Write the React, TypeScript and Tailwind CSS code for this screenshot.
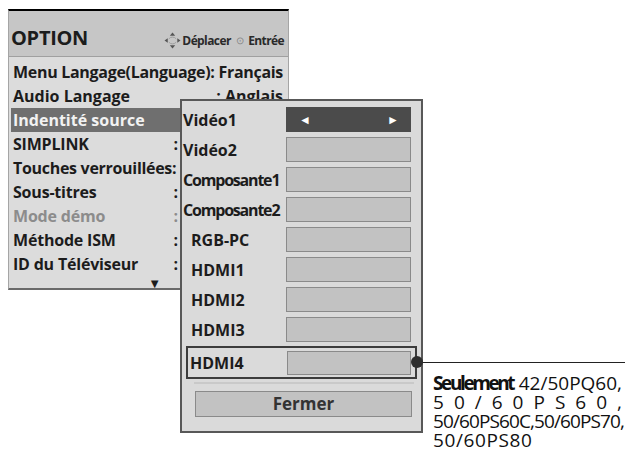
const menuRows = [
  { label: "Menu Langage(Language): Français", kind: "full" },
  { label: "Audio Langage", kind: "value", value: ": Anglais" },
  { label: "Indentité source", kind: "active" },
  { label: "SIMPLINK", kind: "colon" },
  { label: "Touches verrouillées:", kind: "full" },
  { label: "Sous-titres", kind: "colon" },
  { label: "Mode démo", kind: "colon", dim: true },
  { label: "Méthode ISM", kind: "colon" },
  { label: "ID du Téléviseur", kind: "colon" },
];

const sources = [
  { label: "Vidéo1", indent: false, squeeze: false },
  { label: "Vidéo2", indent: false, squeeze: false },
  { label: "Composante1", indent: false, squeeze: true },
  { label: "Composante2", indent: false, squeeze: true },
  { label: "RGB-PC", indent: true, squeeze: false },
  { label: "HDMI1", indent: true, squeeze: false },
  { label: "HDMI2", indent: true, squeeze: false },
  { label: "HDMI3", indent: true, squeeze: false },
];

const MoveIcon = () => (
  <svg width="17" height="17" viewBox="0 0 16 16" className="shrink-0">
    <path d="M4.5 6.5 A4.5 4.5 0 0 1 11.5 6.5" fill="none" stroke="#999" strokeWidth="0.8" />
    <path d="M4.5 9.5 A4.5 4.5 0 0 0 11.5 9.5" fill="none" stroke="#999" strokeWidth="0.8" />
    <polygon points="8,0.5 10.5,3.5 5.5,3.5" fill="#555" />
    <polygon points="8,15.5 10.5,12.5 5.5,12.5" fill="#555" />
    <polygon points="0.5,8 3.5,5.8 3.5,10.2" fill="#555" />
    <polygon points="15.5,8 12.5,5.8 12.5,10.2" fill="#555" />
  </svg>
);

const Field = ({ active }: { active?: boolean }) =>
  active ? (
    <div className="w-[125px] h-[25px] bg-[#4b4b4b] flex items-center justify-between pl-[13px] pr-[12px] text-[12px] text-white leading-none">
      <span>◄</span>
      <span>►</span>
    </div>
  ) : (
    <div className="w-[125px] h-[25px] bg-[#c2c2c2] border border-[#8a8a8a]" />
  );

export default function App() {
  return (
    <div className="relative w-[625px] h-[456px] bg-white overflow-hidden font-['Open_Sans',sans-serif] text-[#1c1c1c]">
      {/* main OPTION menu */}
      <div className="ml-[8px] mt-[9px] w-[281px] border-t-2 border-t-black border-x border-x-[#a5a5a5] border-b-2 border-b-[#6a6a6a] bg-[#dcdcdc]">
        <div className="h-[46px] bg-[#c6c6c6] border-b border-[#a0a0a0] flex items-center justify-between pl-[2px] pr-[4px] pt-[9px]">
          <span className="text-[20px] font-bold tracking-[-0.3px]">OPTION</span>
          <div className="flex items-center gap-[1px] text-[12px] font-bold tracking-[-0.6px] text-[#2a2a2a] pt-[5px]">
            <MoveIcon />
            <span>Déplacer</span>
            <span className="text-[#888] text-[10px] mx-[4px] font-normal">⊙</span>
            <span>Entrée</span>
          </div>
        </div>
        <div className="pt-[3px] px-[2px]">
          {menuRows.map((row) => (
            <div
              key={row.label}
              className={
                "h-[24px] flex items-center text-[16px] font-bold pl-[2px] " +
                (row.kind === "active" ? "bg-[#6f6f6f] text-[#f2f2f2] " : "") +
                (row.dim ? "text-[#8c8c8c] " : "")
              }
            >
              {row.kind === "full" && <span className="tracking-[-0.3px] whitespace-nowrap">{row.label}</span>}
              {row.kind === "value" && (
                <div className="flex w-full justify-between pr-[3px]">
                  <span>{row.label}</span>
                  <span>{row.value}</span>
                </div>
              )}
              {row.kind === "active" && <span>{row.label}</span>}
              {row.kind === "colon" && (
                <div className="flex w-[165px] justify-between">
                  <span className="tracking-[-0.2px]">{row.label}</span>
                  <span>:</span>
                </div>
              )}
            </div>
          ))}
          <div className="h-[12px] flex justify-end pr-[125px]">
            <span className="text-[13px] leading-none pt-[1px]">▼</span>
          </div>
        </div>
      </div>

      {/* source naming popup, over the menu */}
      <div className="absolute left-[180px] top-[99px] w-[243px] h-[334px] border-2 border-[#585858] bg-[#dadada] pt-[6px]">
        <div className="flex flex-col gap-[5px]">
          {sources.map((s, i) => (
            <div key={s.label} className="flex items-center h-[25px]">
              <div
                className={
                  "w-[104px] text-[16px] font-bold whitespace-nowrap " +
                  (s.indent ? "pl-[9px] " : "pl-[1px] ") +
                  (s.squeeze ? "tracking-[-1.2px]" : "")
                }
              >
                {s.label}
              </div>
              <Field active={i === 0} />
            </div>
          ))}
        </div>
        <div className="mt-[4px] ml-[4px] w-[231px] h-[33px] border-2 border-[#3c3c3c] flex items-center pl-[2px]">
          <div className="w-[97px] text-[16px] font-bold">HDMI4</div>
          <div className="w-[124px] h-[24px] bg-[#c2c2c2] border border-[#8a8a8a]" />
        </div>
        <div className="mt-[3px] ml-[12px] w-[220px] h-[2px] bg-[#c9c9c9]" />
        <div className="mt-[7px] ml-[13px] w-[217px] h-[26px] bg-[#c2c2c2] border border-[#8a8a8a] flex items-center justify-center text-[17px] font-bold text-[#333]">
          Fermer
        </div>
      </div>

      {/* annotation */}
      <div className="absolute left-[417px] top-[362px] w-[208px] h-[1px] bg-[#222]" />
      <div className="absolute left-[411px] top-[356px] w-[12px] h-[12px] rounded-full bg-[#2e2e2e]" />
      <div className="absolute left-[433px] top-[374px] w-[189px] text-[19px] leading-[19px] text-[#111]">
        <div className="flex justify-between">
          <span className="font-bold tracking-[-2.4px]">Seulement</span>
          <span>42/50PQ60,</span>
        </div>
        <div className="flex justify-between">
          {"50/60PS60,".split("").map((c, i) => (
            <span key={i}>{c}</span>
          ))}
        </div>
        <div className="tracking-[-0.9px] whitespace-nowrap">50/60PS60C,50/60PS70,</div>
        <div className="tracking-[0.6px]">50/60PS80</div>
      </div>
    </div>
  );
}
